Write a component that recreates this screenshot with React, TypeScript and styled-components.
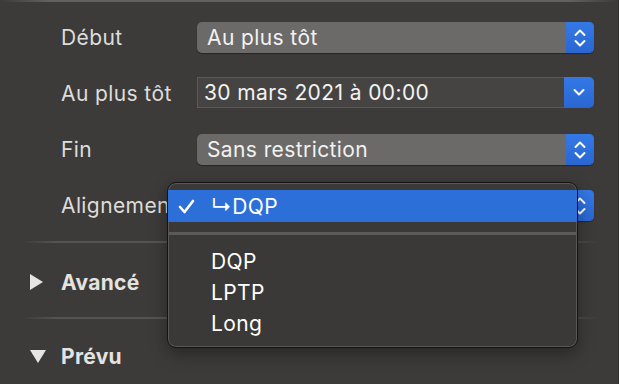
import React from "react";
import styled, { createGlobalStyle } from "styled-components";

const Global = createGlobalStyle`
  html, body { margin: 0; padding: 0; background: #3c3b39; }
  body { width: 619px; height: 384px; overflow: hidden; font-family: Inter, "Noto Sans", "Liberation Sans", sans-serif; -webkit-font-smoothing: antialiased; }
`;

const Panel = styled.div`
  position: relative;
  width: 618px;
  height: 384px;
  border-right: 1px solid #302f2e;
  background: #3c3b39;
  display: flex;
  flex-direction: column;
`;

const TopEdge = styled.div`
  height: 2px;
  background: linear-gradient(90deg, transparent 0, #626160 8%, #626160 92%, transparent 100%);
`;

const Form = styled.div`
  display: grid;
  grid-template-columns: 136px 397px;
  grid-auto-rows: 31px;
  row-gap: 25px;
  padding: 20px 0 0 61px;
  align-items: center;
`;

const Label = styled.div`
  color: #dedddb;
  font-size: 21px;
  letter-spacing: 0.4px;
  white-space: nowrap;
  overflow: hidden;
`;

const Popup = styled.div`
  display: flex;
  height: 31px;
  border-radius: 5px;
  overflow: hidden;
  background: #6b6a68;
  box-shadow: 0 1px 1px rgba(0, 0, 0, 0.35);
`;

const PopupText = styled.div`
  flex: 1;
  color: #f2f2f2;
  font-size: 21px;
  letter-spacing: 0.4px;
  padding-left: 10px;
  line-height: 31px;
`;

const BlueCap = styled.div<{ $w: number }>`
  width: ${(p) => p.$w}px;
  background: linear-gradient(#3479e6, #2a66d2);
  display: flex;
  align-items: center;
  justify-content: center;
`;

const DateField = styled.div`
  display: flex;
  height: 31px;
  margin-top: -3px;
`;

const DateText = styled.div`
  flex: 1;
  color: #f2f2f2;
  font-size: 21px;
  letter-spacing: 0.4px;
  padding-left: 6px;
  line-height: 29px;
  background: #454442;
  border: 1px solid #5b5a58;
  border-right: none;
`;

const DateCap = styled(BlueCap)`
  border-radius: 0 5px 5px 0;
`;

const Separator = styled.div<{ $top: number }>`
  margin: ${(p) => p.$top}px 18px 0 22px;
  height: 2px;
  background: linear-gradient(90deg, transparent 0, #555452 6%, #555452 94%, transparent 100%);
`;

const Section = styled.div<{ $top: number }>`
  display: flex;
  align-items: center;
  margin-top: ${(p) => p.$top}px;
  padding-left: 30px;
  height: 30px;
`;

const Disclosure = styled.div`
  width: 31px;
  display: flex;
  align-items: center;
`;

const SectionTitle = styled.div`
  color: #e4e3e1;
  font-size: 21px;
  letter-spacing: 0.3px;
  font-weight: 700;
`;

const Menu = styled.div`
  position: absolute;
  left: 167px;
  top: 182px;
  width: 411px;
  height: 166px;
  border: 1px solid #141414;
  border-radius: 9px;
  background: rgba(58, 57, 55, 0.97);
  box-shadow: inset 0 0 0 1px rgba(255, 255, 255, 0.16), 0 6px 16px rgba(0, 0, 0, 0.35);
  padding-top: 7px;
  box-sizing: border-box;
  overflow: hidden;
`;

const MenuItem = styled.div<{ $selected?: boolean }>`
  display: flex;
  align-items: center;
  height: ${(p) => (p.$selected ? 32 : 31)}px;
  background: ${(p) => (p.$selected ? "#2c6fd9" : "transparent")};
  color: #ffffff;
  font-size: 21px;
  letter-spacing: 0.4px;
  padding-left: 10px;
`;

const Check = styled.div`
  width: 33px;
  display: flex;
  align-items: center;
`;

const MenuSep = styled.div`
  height: 3px;
  background: #5b5a58;
  margin: 10px 0 11px;
`;

const ItemText = styled.span`
  white-space: nowrap;
  font-family: Inter, "DejaVu Sans", sans-serif;
`;

const UpDown = () => (
  <svg width="14" height="20" viewBox="0 0 14 20" fill="none" stroke="#fff" strokeWidth="2" strokeLinecap="round" strokeLinejoin="round">
    <path d="M2.5 7 L7 2.5 L11.5 7" />
    <path d="M2.5 13 L7 17.5 L11.5 13" />
  </svg>
);

const Down = () => (
  <svg width="14" height="10" viewBox="0 0 14 10" fill="none" stroke="#fff" strokeWidth="2" strokeLinecap="round" strokeLinejoin="round">
    <path d="M2.5 3 L7 7.5 L11.5 3" />
  </svg>
);

const TriRight = () => (
  <svg width="13" height="16" viewBox="0 0 13 16">
    <path d="M0 0 L13 8 L0 16 Z" fill="#e6e5e3" />
  </svg>
);

const TriDown = () => (
  <svg width="16" height="13" viewBox="0 0 16 13">
    <path d="M0 0 L16 0 L8 13 Z" fill="#e6e5e3" />
  </svg>
);

const CheckMark = () => (
  <svg width="17" height="15" viewBox="0 0 17 15" fill="none" stroke="#fff" strokeWidth="2.6" strokeLinecap="round" strokeLinejoin="round">
    <path d="M2 8 L6.5 13 L15 2" />
  </svg>
);

export default function App() {
  return (
    <>
      <Global />
      <Panel>
        <TopEdge />
        <Form>
          <Label>Début</Label>
          <Popup>
            <PopupText>Au plus tôt</PopupText>
            <BlueCap $w={28}><UpDown /></BlueCap>
          </Popup>
          <Label>Au plus tôt</Label>
          <DateField>
            <DateText>30 mars 2021 à 00:00</DateText>
            <DateCap $w={30}><Down /></DateCap>
          </DateField>
          <Label>Fin</Label>
          <Popup>
            <PopupText>Sans restriction</PopupText>
            <BlueCap $w={28}><UpDown /></BlueCap>
          </Popup>
          <Label>Alignement</Label>
          <Popup>
            <PopupText>↳DQP</PopupText>
            <BlueCap $w={28}><UpDown /></BlueCap>
          </Popup>
        </Form>
        <Separator $top={20} />
        <Section $top={24}>
          <Disclosure><TriRight /></Disclosure>
          <SectionTitle>Avancé</SectionTitle>
        </Section>
        <Separator $top={20} />
        <Section $top={22}>
          <Disclosure><TriDown /></Disclosure>
          <SectionTitle>Prévu</SectionTitle>
        </Section>
        <Menu>
          <MenuItem $selected>
            <Check><CheckMark /></Check>
            <ItemText>↳DQP</ItemText>
          </MenuItem>
          <MenuSep />
          <MenuItem><Check />DQP</MenuItem>
          <MenuItem><Check />LPTP</MenuItem>
          <MenuItem><Check />Long</MenuItem>
        </Menu>
      </Panel>
    </>
  );
}
